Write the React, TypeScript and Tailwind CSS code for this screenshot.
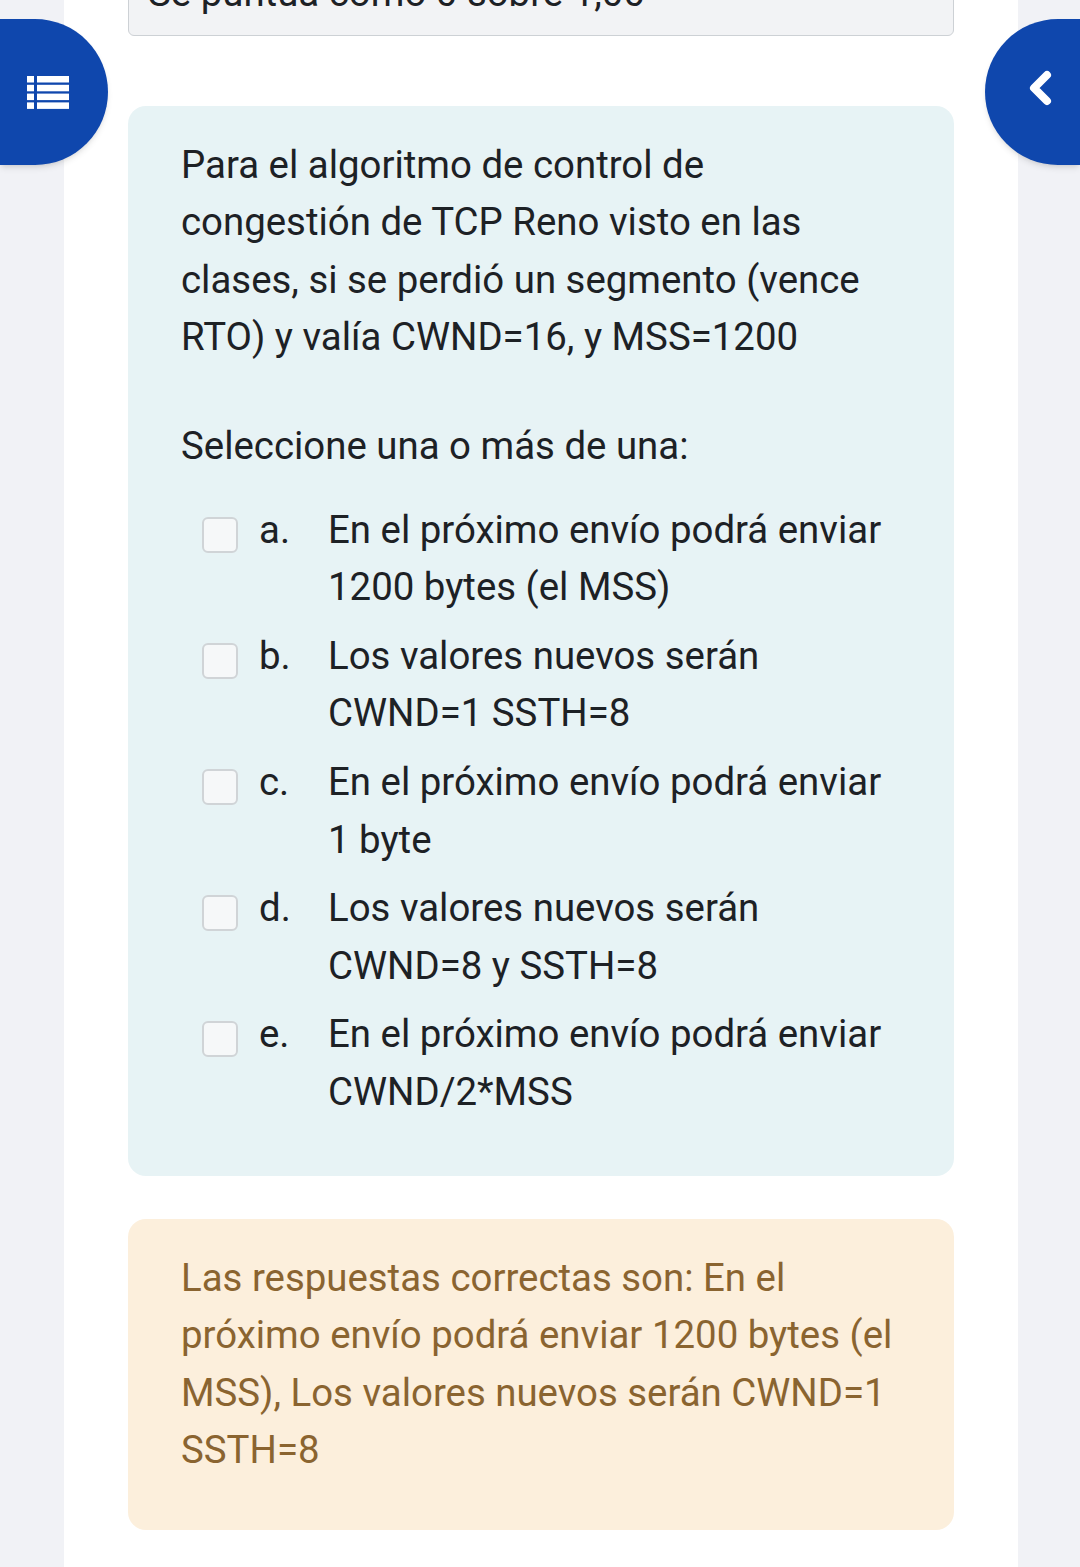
import React from "react";

const options = [
    { letter: "a.", lines: ["En el próximo envío podrá enviar", "1200 bytes (el MSS)"] },
    { letter: "b.", lines: ["Los valores nuevos serán", "CWND=1 SSTH=8"] },
    { letter: "c.", lines: ["En el próximo envío podrá enviar", "1 byte"] },
    { letter: "d.", lines: ["Los valores nuevos serán", "CWND=8 y SSTH=8"] },
    { letter: "e.", lines: ["En el próximo envío podrá enviar", "CWND/2*MSS"] },
];

export default function App() {
    return (
        <div className="relative min-h-screen overflow-hidden bg-[#f1f2f6] font-['Roboto',sans-serif] text-[38.4px] leading-[57.6px] text-[#1d2125]">
            {/* Main column */}
            <div className="ml-[64px] mr-[62px] flex min-h-[1567px] flex-col bg-white px-[64px]">
                {/* Grade box (cut off at top) */}
                <div className="-mt-[52px] rounded-b-[6px] border border-[#cdd1d5] bg-[#f2f3f5] pt-[15px] pb-[13px] pl-[19px]">
                    Se puntúa como 0 sobre 1,00
                </div>

                {/* Question */}
                <div className="mt-[70px] rounded-[18px] bg-[#e7f3f5] pl-[53px] pr-[40px] pt-[30px] pb-[55px]">
                    <p>
                        Para el algoritmo de control de
                        <br />
                        congestión de TCP Reno visto en las
                        <br />
                        clases, si se perdió un segmento (vence
                        <br />
                        RTO) y valía CWND=16, y MSS=1200
                    </p>
                    <p className="mt-[51px]">Seleccione una o más de una:</p>

                    <div className="mt-[26px] flex flex-col gap-[11px] pl-[21px]">
                        {options.map((o) => (
                            <div key={o.letter} className="flex items-start">
                                <span className="mt-[16px] h-[36px] w-[36px] shrink-0 rounded-[6px] border-2 border-[#d0d4d7] bg-[#f6f8f9]" />
                                <span className="ml-[21px] w-[69px] shrink-0">{o.letter}</span>
                                <span>
                                    {o.lines[0]}
                                    <br />
                                    {o.lines[1]}
                                </span>
                            </div>
                        ))}
                    </div>
                </div>

                {/* Correct answer feedback */}
                <div className="mt-[43px] rounded-[18px] bg-[#fcefdc] pl-[53px] pr-[30px] pt-[30px] pb-[51px] text-[#8a6430]">
                    Las respuestas correctas son: En el
                    <br />
                    próximo envío podrá enviar 1200 bytes (el
                    <br />
                    MSS), Los valores nuevos serán CWND=1
                    <br />
                    SSTH=8
                </div>
            </div>

            {/* Drawer toggles */}
            <button className="absolute left-0 top-[19px] flex h-[146px] w-[108px] items-center rounded-r-full bg-[#0f47ad] pl-[27px] shadow-md">
                <svg width="42" height="33" viewBox="0 0 42 33" fill="white">
                    <rect x="0" y="0" width="7" height="6.5" />
                    <rect x="10" y="0" width="32" height="6.5" />
                    <rect x="0" y="8.8" width="7" height="6.5" />
                    <rect x="10" y="8.8" width="32" height="6.5" />
                    <rect x="0" y="17.6" width="7" height="6.5" />
                    <rect x="10" y="17.6" width="32" height="6.5" />
                    <rect x="0" y="26.4" width="7" height="6.5" />
                    <rect x="10" y="26.4" width="32" height="6.5" />
                </svg>
            </button>
            <button className="absolute left-[985px] top-[19px] flex h-[146px] w-[95px] items-start rounded-l-full bg-[#0f47ad] pl-[42px] pt-[51px] shadow-md">
                <svg width="26" height="36" viewBox="0 0 26 36" fill="none">
                    <polyline
                        points="20,5 7,18 20,31"
                        stroke="white"
                        strokeWidth="8"
                        strokeLinecap="round"
                        strokeLinejoin="round"
                    />
                </svg>
            </button>
        </div>
    );
}
